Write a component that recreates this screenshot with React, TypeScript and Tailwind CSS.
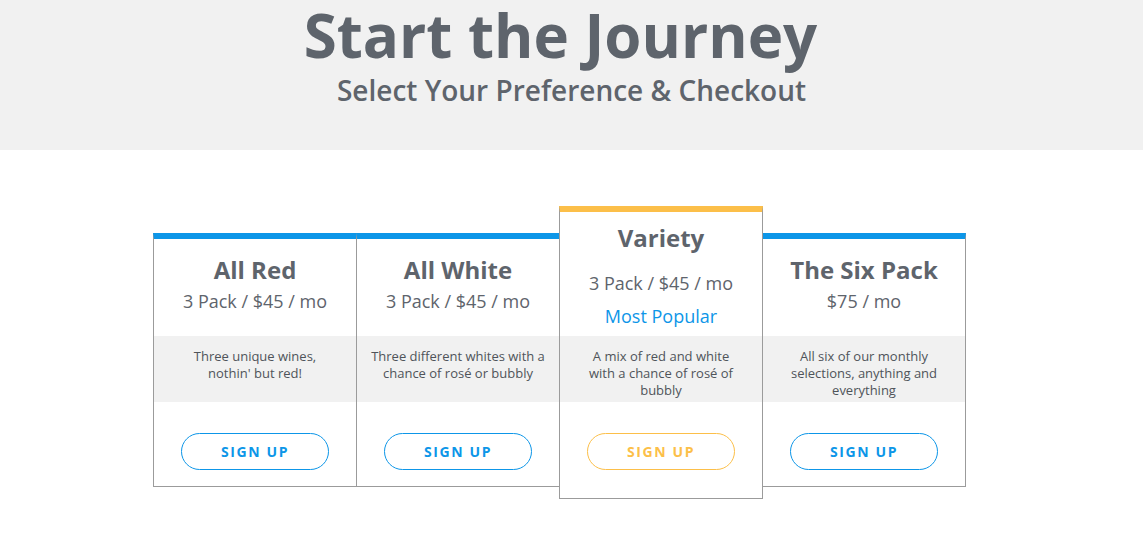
import React from "react";

type Plan = {
  name: string;
  price: string;
  lines: string[];
  featured?: boolean;
};

const plans: Plan[] = [
  { name: "All Red", price: "3 Pack / $45 / mo", lines: ["Three unique wines,", "nothin' but red!"] },
  { name: "All White", price: "3 Pack / $45 / mo", lines: ["Three different whites with a", "chance of rosé or bubbly"] },
  {
    name: "Variety",
    price: "3 Pack / $45 / mo",
    lines: ["A mix of red and white", "with a chance of rosé of", "bubbly"],
    featured: true,
  },
  { name: "The Six Pack", price: "$75 / mo", lines: ["All six of our monthly", "selections, anything and", "everything"] },
];

function Description({ lines }: { lines: string[] }) {
  return (
    <div className="h-[66px] bg-[#f1f1f1] px-2 pt-[12px] text-center text-[13px] leading-[17px] text-[#4f545a]">
      {lines.map((l, i) => (
        <div key={i}>{l}</div>
      ))}
    </div>
  );
}

function PlanCard({ plan }: { plan: Plan }) {
  if (plan.featured) {
    return (
      <div className="relative z-10 -ml-px w-[204px] border border-t-[6px] border-[#9b9b9b] border-t-[#fcbf49] bg-white">
        <div className="h-[124px] pt-[10px] text-center">
          <h3 className="text-[24px] font-bold leading-[32px] text-[#5e646c]">{plan.name}</h3>
          <p className="mt-[15px] text-[18px] leading-[28px] text-[#5e646c]">{plan.price}</p>
          <p className="mt-[5px] text-[18px] leading-[28px] text-[#0d96e8]">Most Popular</p>
        </div>
        <Description lines={plan.lines} />
        <div className="flex h-[96px] justify-center pt-[31px]">
          <button className="h-[37px] w-[148px] rounded-full border border-[#fcbf49] text-[14px] font-bold tracking-[1.6px] text-[#fcbf49]">
            SIGN UP
          </button>
        </div>
      </div>
    );
  }

  return (
    <div className="-ml-px mt-[27px] w-[204px] border border-t-[6px] border-[#9b9b9b] border-t-[#0d96e8] bg-white first:ml-0">
      <div className="h-[97px] pt-[15px] text-center">
        <h3 className="text-[24px] font-bold leading-[32px] text-[#5e646c]">{plan.name}</h3>
        <p className="mt-px text-[18px] leading-[28px] text-[#5e646c]">{plan.price}</p>
      </div>
      <Description lines={plan.lines} />
      <div className="flex h-[84px] justify-center pt-[31px]">
        <button className="h-[37px] w-[148px] rounded-full border border-[#0d96e8] text-[14px] font-bold tracking-[1.6px] text-[#0d96e8]">
          SIGN UP
        </button>
      </div>
    </div>
  );
}

export default function App() {
  return (
    <div className="min-h-screen bg-white font-['Open_Sans',sans-serif]">
      <header className="h-[150px] bg-[#f1f1f1] pt-[5px] text-center">
        <h1 className="pr-[22px] text-[60px] font-bold leading-[60px] text-[#5e646c]">Start the Journey</h1>
        <p className="mt-[11px] text-[28px] font-semibold leading-[28px] text-[#5e646c]">
          Select Your Preference &amp; Checkout
        </p>
      </header>
      <main className="ml-[153px] flex items-start pt-[56px]">
        {plans.map((p) => (
          <PlanCard key={p.name} plan={p} />
        ))}
      </main>
    </div>
  );
}
